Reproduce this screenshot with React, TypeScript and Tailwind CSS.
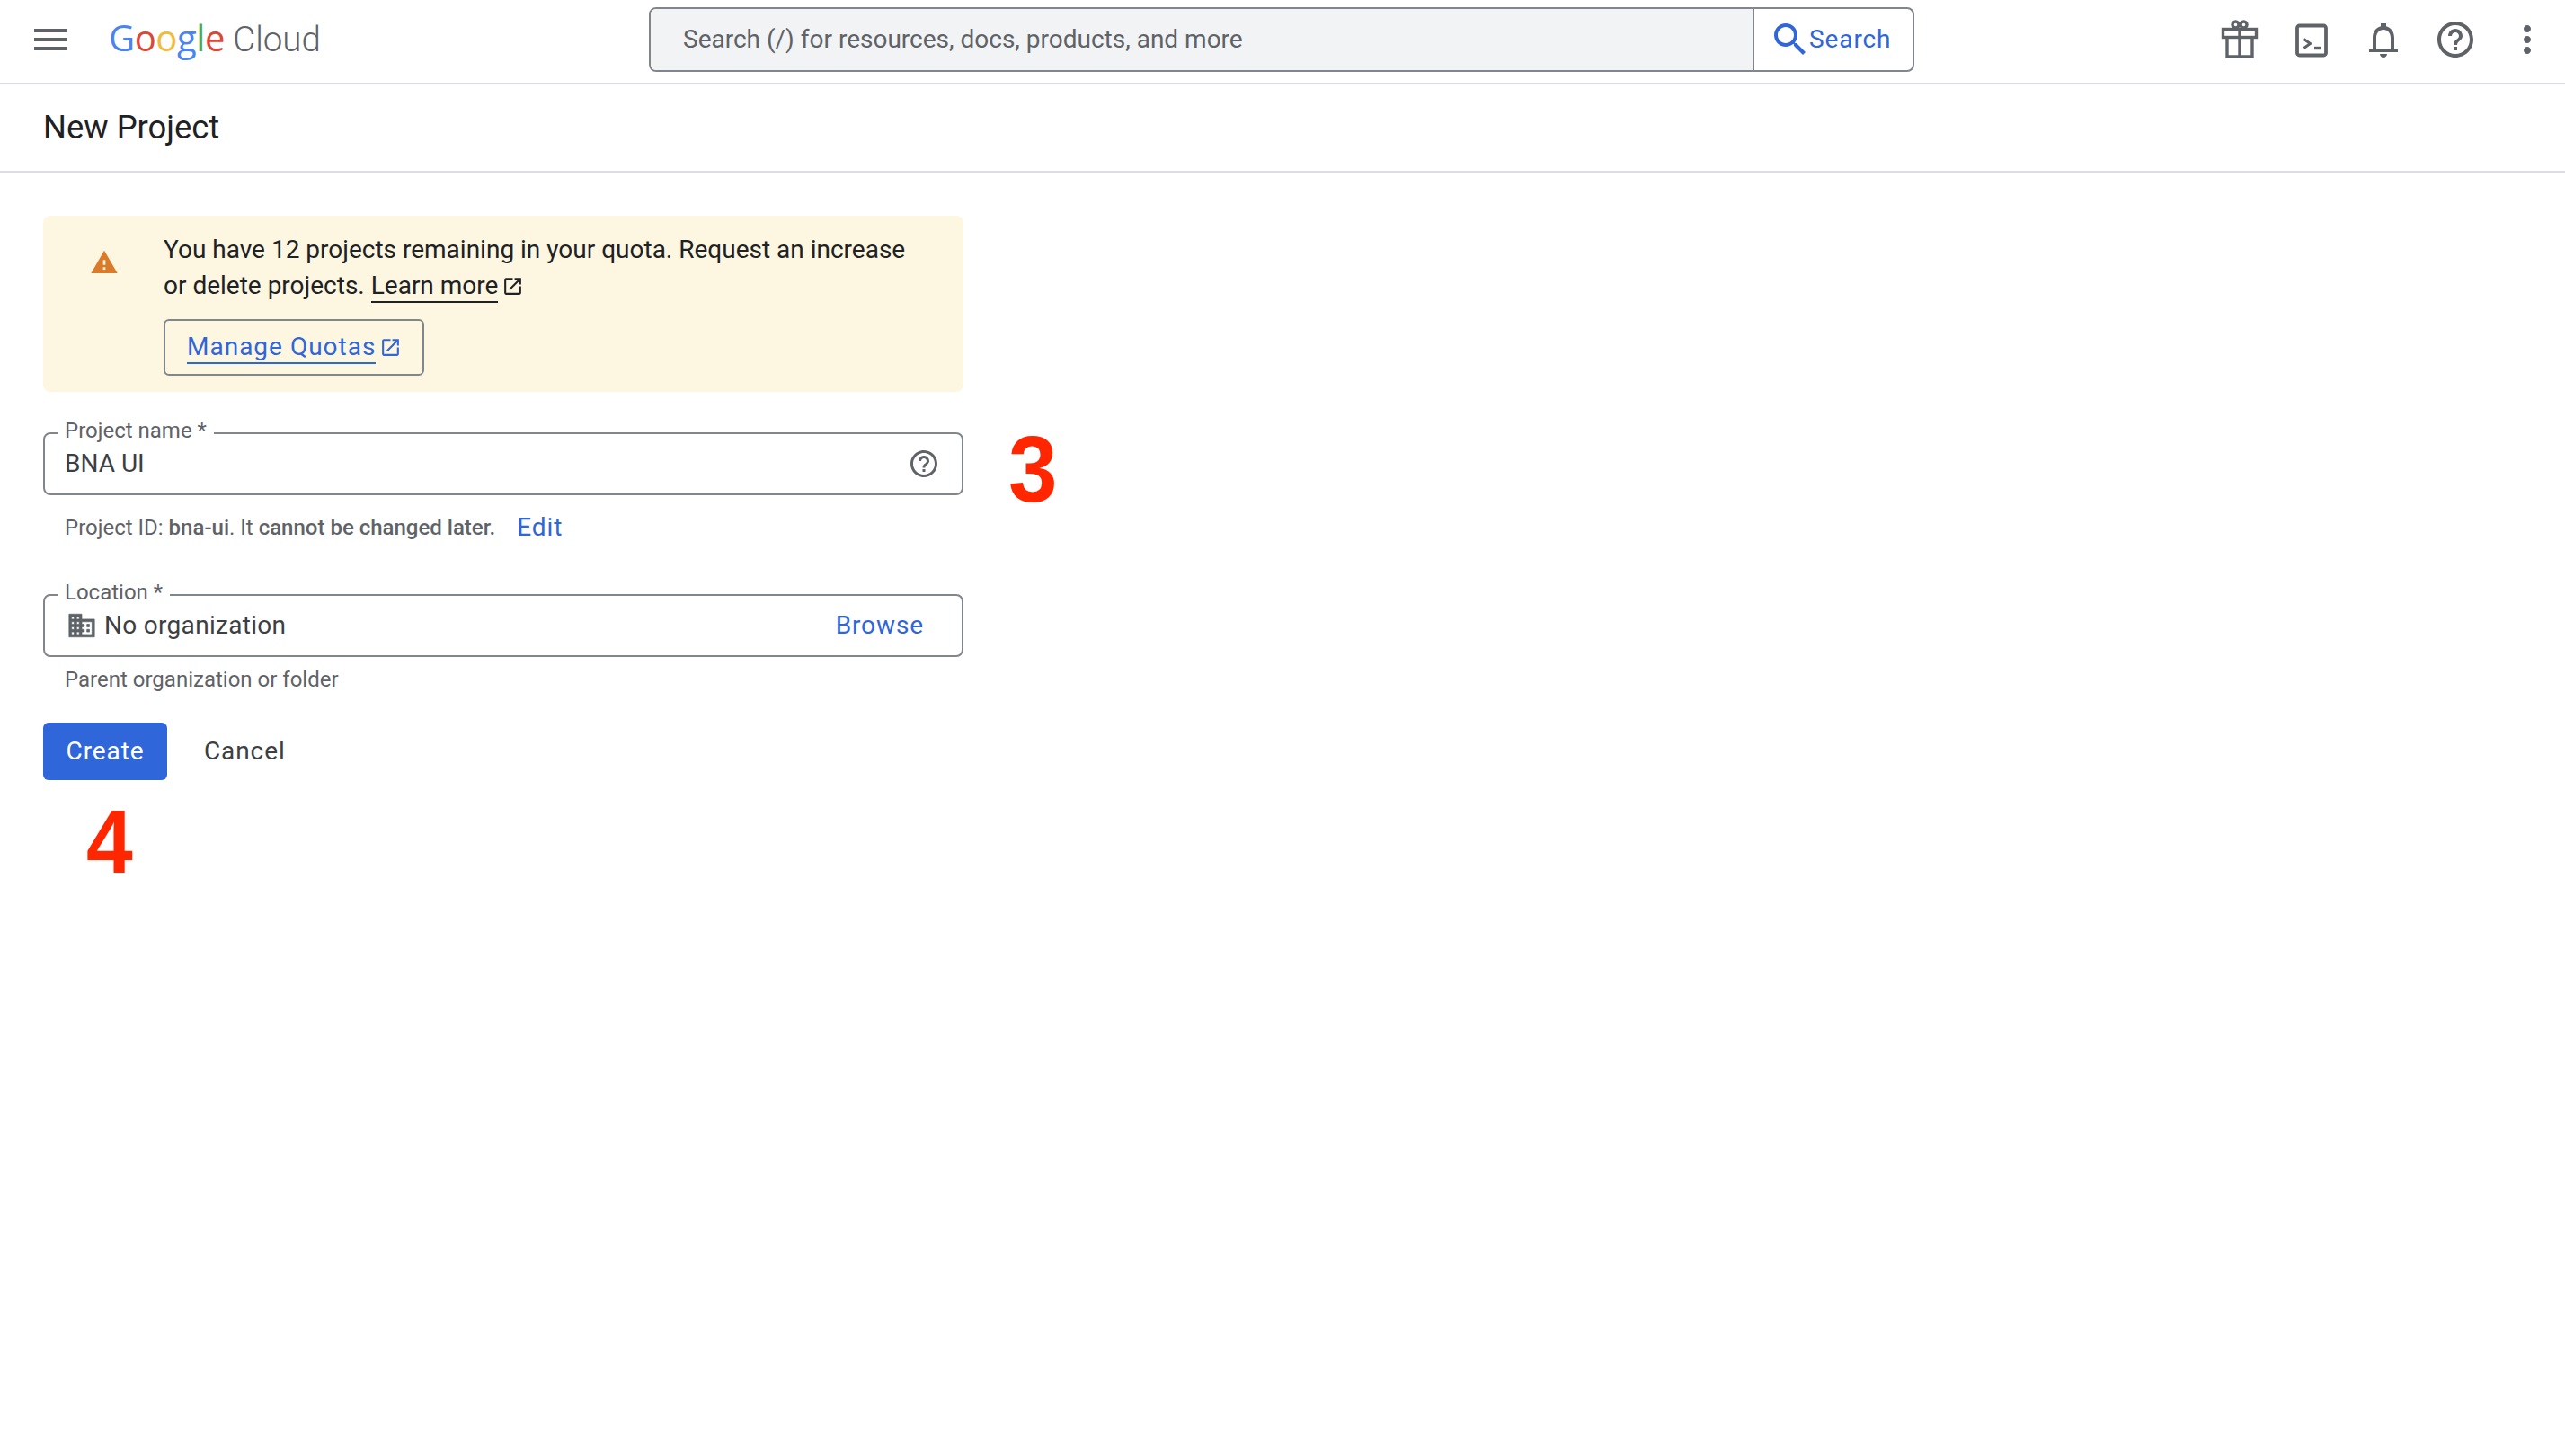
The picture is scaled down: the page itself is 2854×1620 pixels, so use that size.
import React from "react";

const HELP = "M11 18h2v-2h-2v2zm1-16C6.48 2 2 6.48 2 12s4.48 10 10 10 10-4.48 10-10S17.52 2 12 2zm0 18c-4.41 0-8-3.59-8-8s3.59-8 8-8 8 3.59 8 8-3.59 8-8 8zm0-14c-2.21 0-4 1.79-4 4h2c0-1.1.9-2 2-2s2 .9 2 2c0 2-3 1.75-3 5h2c0-2.25 3-2.5 3-5 0-2.21-1.79-4-4-4z";
const OPEN = "M19 19H5V5h7V3H5c-1.11 0-2 .9-2 2v14c0 1.1.89 2 2 2h14c1.1 0 2-.9 2-2v-7h-2v7zM14 3v2h3.59l-9.83 9.83 1.41 1.41L19 6.41V10h2V3h-7z";

function Icon({ d, className }: { d: string; className: string }) {
  return (
    <svg viewBox="0 0 24 24" fill="currentColor" className={className}>
      <path d={d} />
    </svg>
  );
}

function Gift() {
  return (
    <svg viewBox="0 0 48 48" className="w-[48px] h-[48px] text-[#5f6368]" fill="none" stroke="currentColor" strokeWidth="3.4">
      <rect x="5.5" y="12.5" width="37" height="9" />
      <path d="M10 21v22h28V21M24 12v31" />
      <circle cx="19.5" cy="7.5" r="3.5" />
      <circle cx="28.5" cy="7.5" r="3.5" />
    </svg>
  );
}

function Terminal() {
  return (
    <svg viewBox="0 0 48 48" className="w-[48px] h-[48px] text-[#5f6368]" fill="none" stroke="currentColor" strokeWidth="3.8">
      <rect x="8" y="8.5" width="32" height="33" rx="2.5" />
      <path d="M15.5 23.5l7 5-7 5" strokeWidth="3" />
      <path d="M27 33.5h7" strokeWidth="3.4" />
    </svg>
  );
}

export default function App() {
  return (
    <div className="min-h-[1620px] bg-white [font-family:Roboto,sans-serif] text-[#202124]">
      {/* Top bar */}
      <header className="flex h-[94px] items-center border-b-2 border-[#dddce3] pl-[32px] pb-[4px]">
        <Icon d="M3 18h18v-2H3v2zm0-5h18v-2H3v2zm0-7v2h18V6H3z" className="w-[48px] h-[48px] text-[#5f6368]" />
        <div className="ml-[41px] mb-[3px] flex w-[601px] items-baseline leading-none">
          <span className="[font-family:'Open_Sans',sans-serif] text-[40px] tracking-[-0.4px]">
            <span className="text-[#4c84ee]">G</span>
            <span className="text-[#d9493a]">o</span>
            <span className="text-[#f3bb3b]">o</span>
            <span className="text-[#4c84ee]">g</span>
            <span className="text-[#4fa853]">l</span>
            <span className="text-[#d9493a]">e</span>
          </span>
          <span className="ml-[9px] font-light text-[#5f6368] text-[38.5px]">Cloud</span>
        </div>
        <div className="flex h-[72px] w-[1408px] overflow-hidden rounded-[8px] border-2 border-[#80868b]">
          <div className="flex flex-1 items-center bg-[#f1f3f4] pl-[36px] text-[28px] text-[#5f6368]">
            Search (/) for resources, docs, products, and more
          </div>
          <div className="flex w-[177px] items-center border-l border-[#80868b] pl-[16px] text-[#2f66d9]">
            <Icon d="M15.5 14h-.79l-.28-.27C15.41 12.59 16 11.11 16 9.5 16 5.91 13.09 3 9.5 3S3 5.91 3 9.5 5.91 16 9.5 16c1.61 0 3.09-.59 4.23-1.57l.27.28v.79l5 4.99L20.49 19l-4.99-5zm-6 0C7.01 14 5 11.99 5 9.5S7.01 5 9.5 5 14 7.01 14 9.5 11.99 14 9.5 14z" className="w-[48px] h-[48px] shrink-0" />
            <span className="ml-[-3px] text-[28px] font-[450] tracking-[0.9px]">Search</span>
          </div>
        </div>
        <div className="ml-[338px] flex items-center gap-[32px]">
          <Gift />
          <Terminal />
          <Icon d="M12 22c1.1 0 2-.9 2-2h-4c0 1.1.9 2 2 2zM18 17v-6c0-3.07-1.64-5.64-4.5-6.32V3h-3v1.68C7.63 5.36 6 7.92 6 11v6H4v2h16v-2h-2zm-2 0H8v-6c0-2.48 1.51-4.5 4-4.5s4 2.02 4 4.5v6z" className="w-[48px] h-[48px] text-[#5f6368]" />
          <Icon d={HELP} className="w-[48px] h-[48px] text-[#5f6368]" />
          <Icon d="M12 8c1.1 0 2-.9 2-2s-.9-2-2-2-2 .9-2 2 .9 2 2 2zm0 2c-1.1 0-2 .9-2 2s.9 2 2 2 2-.9 2-2-.9-2-2-2zm0 6c-1.1 0-2 .9-2 2s.9 2 2 2 2-.9 2-2-.9-2-2-2z" className="w-[48px] h-[48px] text-[#5f6368]" />
        </div>
      </header>

      {/* Title */}
      <div className="flex h-[98px] items-center border-b-2 border-[#dddce3] pl-[48px] text-[36.4px] leading-none text-[#202124]">
        New Project
      </div>

      {/* Form */}
      <main className="pl-[48px] pt-[48px]">
        <div className="flex h-[196px] w-[1024px] rounded-[8px] bg-[#fdf6e0]">
          <div className="flex w-[134px] shrink-0 justify-center pl-[2px] pt-[36px]">
            <Icon d="M1 21h22L12 2 1 21zm12-3h-2v-2h2v2zm0-4h-2v-4h2v4z" className="w-[32px] h-[32px] text-[#d97b2a]" />
          </div>
          <div className="pt-[18px]">
            <p className="text-[28px] leading-[40px] text-[#202124]">
              You have 12 projects remaining in your quota. Request an increase
              <br />
              or delete projects.{" "}
              <a className="border-b-2 border-[#202124] pb-[1px]">Learn more</a>
              <Icon d={OPEN} className="ml-[4px] inline-block w-[25px] h-[25px] align-[-4px]" />
            </p>
            <div className="mt-[17px] flex h-[63px] w-[290px] items-center rounded-[6px] border-2 border-[#80868b] pl-[24px] text-[#2f66d9]">
              <a className="border-b-2 border-[#2f66d9] text-[28px] font-[450] tracking-[1px] leading-[34px]">Manage Quotas</a>
              <Icon d={OPEN} className="ml-[4px] w-[25px] h-[25px]" />
            </div>
          </div>
        </div>

        <div className="mt-[45px] flex">
          <div className="relative flex h-[70px] w-[1024px] items-center rounded-[8px] border-2 border-[#80868b] pl-[22px] pr-[24px]">
            <span className="absolute left-[14px] top-[-17px] bg-white px-[8px] text-[24px] leading-[26px] text-[#5f6368]">Project name *</span>
            <span className="flex-1 text-[28px] text-[#3c4043]">BNA UI</span>
            <Icon d={HELP} className="w-[36px] h-[36px] text-[#5f6368]" />
          </div>
          <span className="ml-[50px] mt-[-10px] h-[70px] origin-left scale-x-[0.95] text-[103px] font-bold leading-[103px] text-[#ff2600] [font-family:'Liberation_Sans',sans-serif]">3</span>
        </div>

        <div className="mt-[18px] flex h-[36px] items-center pl-[24px] text-[24px] text-[#5f6368]">
          <span>
            Project ID: <span className="font-medium">bna-ui</span>. It <span className="font-medium">cannot be changed later.</span>
          </span>
          <a className="ml-[24px] text-[28px] font-[450] tracking-[0.9px] text-[#2f66d9]">Edit</a>
        </div>

        <div className="mt-[56px] relative flex h-[70px] w-[1024px] items-center rounded-[8px] border-2 border-[#80868b] pl-[24px] pr-[42px]">
          <span className="absolute left-[14px] top-[-17px] bg-white px-[8px] text-[24px] leading-[26px] text-[#5f6368]">Location *</span>
          <svg viewBox="0 0 24 24" fill="currentColor" stroke="currentColor" strokeWidth="0.5" className="w-[34px] h-[34px] text-[#5f6368]">
            <path d="M12 7V3H2v18h20V7H12zM6 19H4v-2h2v2zm0-4H4v-2h2v2zm0-4H4V9h2v2zm0-4H4V5h2v2zm4 12H8v-2h2v2zm0-4H8v-2h2v2zm0-4H8V9h2v2zm0-4H8V5h2v2zm10 12h-8v-2h2v-2h-2v-2h2v-2h-2V9h8v10zm-2-8h-2v2h2v-2zm0 4h-2v2h2v-2z" />
          </svg>
          <span className="ml-[8px] flex-1 text-[28px] tracking-[0.3px] text-[#3c4043]">No organization</span>
          <a className="text-[28px] font-[450] tracking-[0.9px] text-[#2f66d9]">Browse</a>
        </div>

        <div className="mt-[12px] pl-[24px] text-[24px] leading-[26px] text-[#5f6368]">Parent organization or folder</div>

        <div className="mt-[35px] flex items-center">
          <button className="h-[64px] w-[138px] rounded-[6px] bg-[#2f66d9] text-[28px] font-[450] tracking-[0.9px] text-white">Create</button>
          <button className="ml-[41px] text-[28px] font-[450] tracking-[0.9px] text-[#3c4043]">Cancel</button>
        </div>

        <div className="ml-[48px] mt-[18px] w-fit origin-left scale-x-[0.93] text-[100px] font-bold leading-[100px] text-[#ff2600] [font-family:'Liberation_Sans',sans-serif]">4</div>
      </main>
    </div>
  );
}
